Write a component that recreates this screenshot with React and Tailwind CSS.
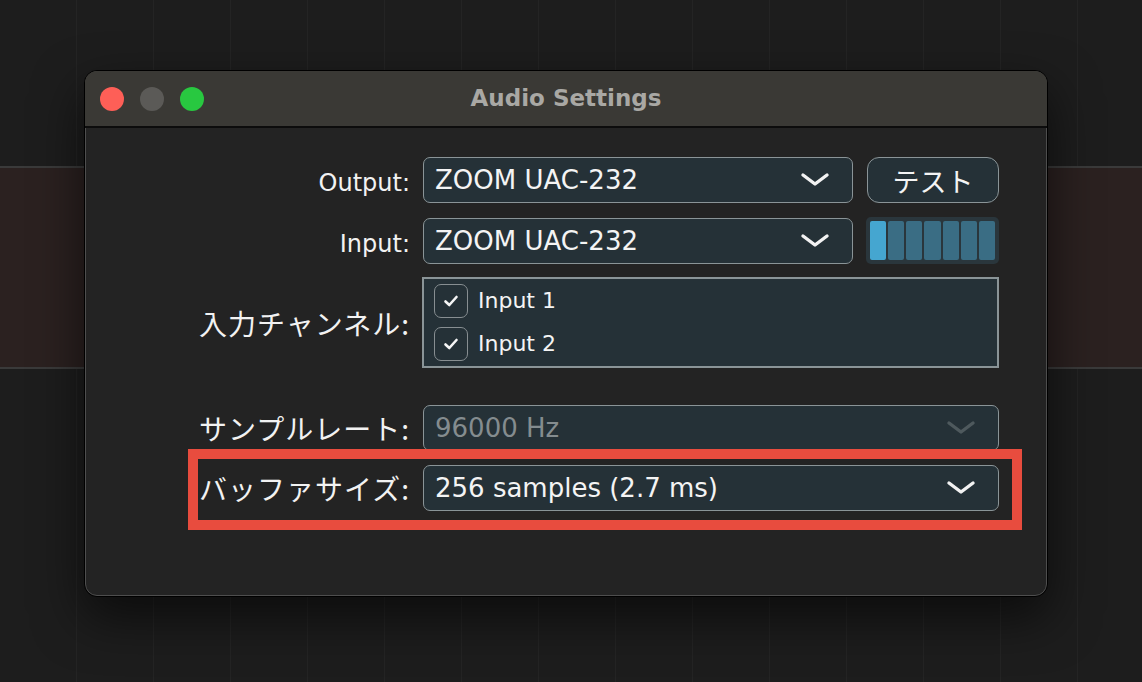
import React from "react";

const latin = { fontFamily: '"DejaVu Sans", "Noto Sans CJK JP", sans-serif' };
const jp = { fontFamily: '"Noto Sans CJK JP", "DejaVu Sans", sans-serif' };

function Chevron({ dim }) {
  return (
    <svg width="30" height="16" viewBox="0 0 30 16" className="shrink-0">
      <path
        d="M3 3 L15 12 L27 3"
        fill="none"
        stroke={dim ? "#4e595d" : "#f2f2f2"}
        strokeWidth="3.4"
        strokeLinecap="round"
        strokeLinejoin="round"
      />
    </svg>
  );
}

function Select({ value, dim, className = "" }) {
  return (
    <div
      className={`h-[46px] flex items-center justify-between rounded-[7px] border-[1.5px] border-[#8a9497] bg-[#253137] pl-[11px] pr-[22px] ${className}`}
    >
      <span
        className={`text-[26px] leading-none ${dim ? "text-[#848c8f]" : "text-[#f4f4f4]"}`}
        style={latin}
      >
        {value}
      </span>
      <Chevron dim={dim} />
    </div>
  );
}

function Check() {
  return (
    <div className="w-[34px] h-[34px] rounded-[7px] border-[1.5px] border-[#878e91] bg-[#253137] flex items-center justify-center">
      <svg width="16" height="14" viewBox="0 0 16 14">
        <path d="M2.5 7.5 L6.3 11 L13.5 3" fill="none" stroke="#f5f5f5" strokeWidth="2.6" strokeLinecap="round" strokeLinejoin="round" />
      </svg>
    </div>
  );
}

function Label({ children }) {
  return (
    <div className="w-[325px] shrink-0 text-right text-[28px] tracking-[1px] leading-none text-[#f2f2f2]" style={jp}>
      {children}
    </div>
  );
}

export default function App() {
  return (
    <div className="relative w-[1142px] h-[682px] overflow-hidden bg-[#1d1d1d] bg-[repeating-linear-gradient(90deg,#1d1d1d_0px,#1d1d1d_76px,#242424_76px,#242424_77px)]">
      {/* reddish track band */}
      <div className="absolute left-0 right-0 top-[166px] h-[203px] border-y-2 border-[#3a3a3a] bg-[#2b2120]" />

      {/* window */}
      <div className="absolute left-[84px] top-[70px] w-[964px] h-[527px] rounded-[13px] border border-black bg-[#232323] shadow-[0_20px_50px_rgba(0,0,0,0.6)] overflow-hidden">
        <div className="absolute inset-0 rounded-[12px] border border-[#4e4e4e] pointer-events-none" />
        {/* title bar */}
        <div className="relative h-[57px] bg-[#3a3935] border-b-2 border-[#0c0c0c] flex items-center">
          <div className="flex items-center gap-[16px] pl-[15px]">
            <div className="w-[24px] h-[24px] rounded-full bg-[#fe5f57]" />
            <div className="w-[24px] h-[24px] rounded-full bg-[#5b5a57]" />
            <div className="w-[24px] h-[24px] rounded-full bg-[#28c840]" />
          </div>
          <div
            className="absolute inset-0 flex items-center justify-center text-[23px] font-bold text-[#a9a8a4]"
            style={{ fontFamily: '"DejaVu Sans", sans-serif' }}
          >
            Audio Settings
          </div>
        </div>

        {/* body */}
        <div className="relative flex flex-col pt-[29px]">
          {/* Output */}
          <div className="flex items-center gap-[13px]">
            <Label><span style={latin} className="text-[24px] tracking-normal">Output:</span></Label>
            <Select value="ZOOM UAC-232" className="w-[430px]" />
            <button
              className="ml-[1px] w-[132px] h-[46px] rounded-[12px] border-[1.5px] border-[#8a9497] bg-[#253137] text-[#f4f4f4] text-[27px] leading-none"
              style={jp}
            >
              テスト
            </button>
          </div>

          {/* Input */}
          <div className="flex items-center gap-[13px] mt-[14px]">
            <Label><span style={latin} className="text-[24px] tracking-normal">Input:</span></Label>
            <Select value="ZOOM UAC-232" className="w-[430px]" />
            <div className="w-[133px] h-[47px] rounded-[5px] bg-[#2a363c] flex items-center gap-[2px] px-[4px] py-[4px]">
              <div className="flex-1 h-full rounded-[2px] bg-[#45a6d0]" />
              <div className="flex-1 h-full rounded-[2px] bg-[#3a6d84]" />
              <div className="flex-1 h-full rounded-[2px] bg-[#3a6d84]" />
              <div className="flex-1 h-full rounded-[2px] bg-[#3a6d84]" />
              <div className="flex-1 h-full rounded-[2px] bg-[#3a6d84]" />
              <div className="flex-1 h-full rounded-[2px] bg-[#3a6d84]" />
              <div className="flex-1 h-full rounded-[2px] bg-[#3a6d84]" />
            </div>
          </div>

          {/* Input channels */}
          <div className="flex items-center gap-[12px] mt-[13px]">
            <Label>入力チャンネル:</Label>
            <div className="w-[577px] h-[91px] border-2 border-[#8a9497] bg-[#253137] flex flex-col justify-center gap-[9px] pl-[10px]">
              <div className="flex items-center gap-[10px]">
                <Check />
                <span className="text-[22px] leading-none text-[#f4f4f4]" style={latin}>Input 1</span>
              </div>
              <div className="flex items-center gap-[10px]">
                <Check />
                <span className="text-[22px] leading-none text-[#f4f4f4]" style={latin}>Input 2</span>
              </div>
            </div>
          </div>

          {/* Sample rate */}
          <div className="flex items-center gap-[13px] mt-[37px]">
            <Label>サンプルレート:</Label>
            <Select value="96000 Hz" dim className="w-[576px]" />
          </div>

          {/* Buffer size */}
          <div className="flex items-center gap-[13px] mt-[14px]">
            <Label>バッファサイズ:</Label>
            <Select value="256 samples (2.7 ms)" className="w-[576px]" />
          </div>
        </div>

        {/* red highlight */}
        <div className="absolute left-[103px] top-[378px] w-[834px] h-[81px] border-[10px] border-[#e84c3e]" />
      </div>
    </div>
  );
}
